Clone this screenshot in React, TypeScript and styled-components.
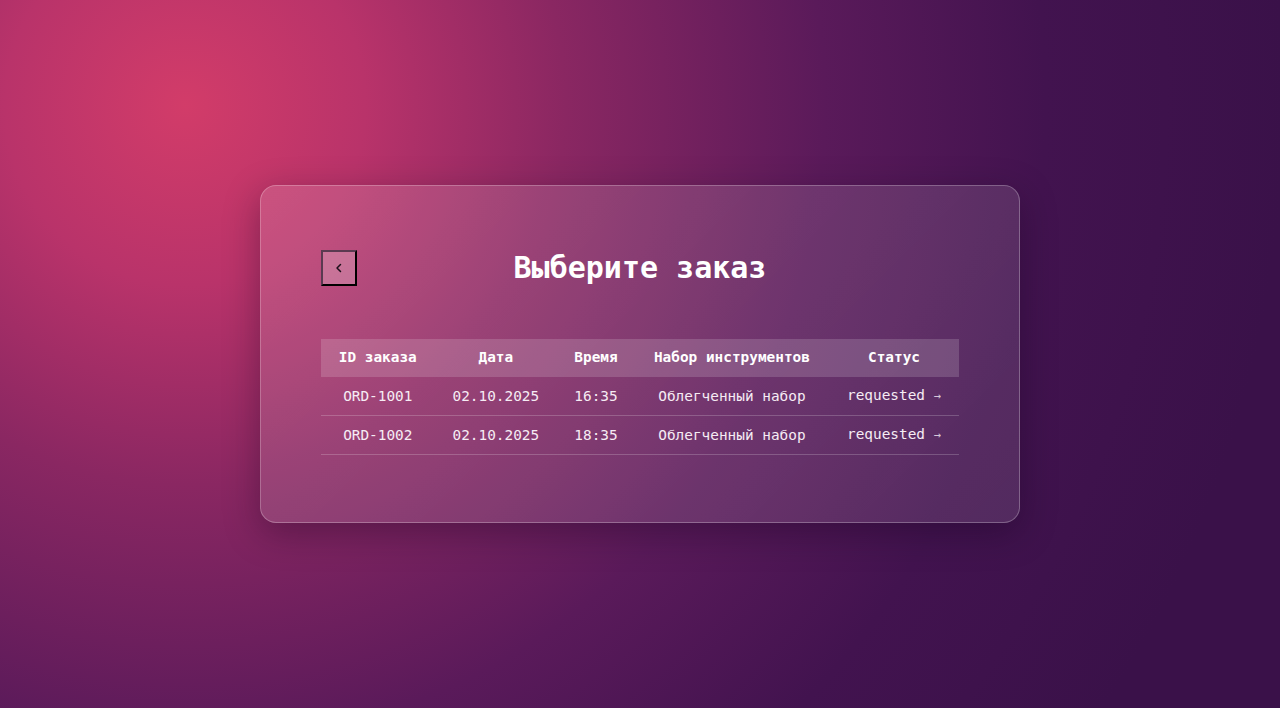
import React from "react";
import styled, { createGlobalStyle } from "styled-components";

const GlobalStyle = createGlobalStyle`
  html, body { margin: 0; padding: 0; height: 100%; }
  body {
    font-family: "DejaVu Sans Mono", "Liberation Mono", monospace;
    background: #3a1249;
  }
  #root { height: 100%; }
`;

const Page = styled.div`
  width: 1280px;
  height: 708px;
  display: flex;
  align-items: center;
  justify-content: center;
  background:
    radial-gradient(circle at 185px 105px, #d23c69 0px, #b9336a 180px, #8a2762 380px, #5a1a5a 640px, #42134f 860px, #3a1149 1100px);
  overflow: hidden;
`;

const Card = styled.div`
  width: 760px;
  box-sizing: border-box;
  padding: 64px 60px 67px;
  border-radius: 16px;
  border: 1px solid rgba(255, 255, 255, 0.25);
  background: linear-gradient(135deg, rgba(255, 255, 255, 0.14), rgba(255, 255, 255, 0.1));
  box-shadow: 0 10px 35px rgba(20, 0, 30, 0.35);
`;

const Header = styled.div`
  display: grid;
  grid-template-columns: 36px 1fr 36px;
  align-items: center;
  height: 36px;
  margin-bottom: 53px;
`;

const BackButton = styled.button`
  width: 36px;
  height: 36px;
  box-sizing: border-box;
  padding: 0;
  display: flex;
  align-items: center;
  justify-content: center;
  background: rgba(255, 255, 255, 0.22);
  border: 2px outset #3b1f35;
  border-top-color: #5a3a50;
  border-left-color: #5a3a50;
  color: #1c0f1a;
  cursor: pointer;
`;

const Title = styled.h1`
  margin: 0;
  text-align: center;
  color: #ffffff;
  font-size: 30px;
  font-weight: 700;
  line-height: 36px;
  grid-column: 2;
`;

const Table = styled.table`
  width: 100%;
  border-collapse: collapse;
  color: #ffffff;
  font-size: 14.4px;
`;

const HeadRow = styled.tr`
  background: rgba(255, 255, 255, 0.16);
`;

const Th = styled.th`
  padding: 10px 16px 11px;
  line-height: 17px;
  font-weight: 700;
  text-align: center;
  white-space: nowrap;
`;

const Row = styled.tr`
  border-bottom: 1px solid rgba(255, 255, 255, 0.2);
`;

const Td = styled.td`
  padding: 10px 16px;
  line-height: 17px;
  text-align: center;
  white-space: nowrap;
  color: #f6ecf4;
`;

const Arrow = styled.span`
  font-size: 12px;
  opacity: 0.8;
`;

const orders = [
  { id: "ORD-1001", date: "02.10.2025", time: "16:35", kit: "Облегченный набор", status: "requested" },
  { id: "ORD-1002", date: "02.10.2025", time: "18:35", kit: "Облегченный набор", status: "requested" },
];

export default function App() {
  return (
    <>
      <GlobalStyle />
      <Page>
        <Card>
          <Header>
            <BackButton aria-label="Назад">
              <svg width="12" height="12" viewBox="0 0 24 24" fill="none" stroke="currentColor" strokeWidth="3" strokeLinecap="round" strokeLinejoin="round">
                <path d="M15 5l-7 7 7 7" />
              </svg>
            </BackButton>
            <Title>Выберите заказ</Title>
          </Header>
          <Table>
            <thead>
              <HeadRow>
                <Th>ID заказа</Th>
                <Th>Дата</Th>
                <Th>Время</Th>
                <Th>Набор инструментов</Th>
                <Th>Статус</Th>
              </HeadRow>
            </thead>
            <tbody>
              {orders.map((o) => (
                <Row key={o.id}>
                  <Td>{o.id}</Td>
                  <Td>{o.date}</Td>
                  <Td>{o.time}</Td>
                  <Td>{o.kit}</Td>
                  <Td>
                    {o.status} <Arrow>→</Arrow>
                  </Td>
                </Row>
              ))}
            </tbody>
          </Table>
        </Card>
      </Page>
    </>
  );
}
